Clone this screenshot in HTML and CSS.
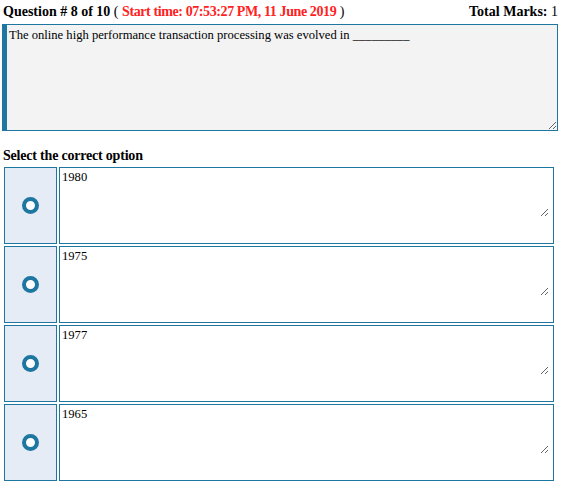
FILE: index.html
```html
<!DOCTYPE html>
<html lang="en">
<head>
    <meta charset="UTF-8">
    <title>Quiz - Question 8</title>
    <link rel="stylesheet" href="styles.css">
</head>
<body>
    <div class="quiz">
        <div class="quiz-header">
            <div class="q-title">Question # 8 of 10 <span class="plain">(</span> <span class="start-time">Start time: 07:53:27 PM, 11 June 2019</span> <span class="plain">)</span></div>
            <div class="q-marks">Total Marks: <span class="plain">1</span></div>
        </div>
        <div class="question-box">
            <textarea class="question-text" readonly>The online high performance transaction processing was evolved in _________</textarea>
        </div>
        <h3 class="options-title">Select the correct option</h3>
        <div class="options">
            <div class="option-row">
                <div class="option-radio"><span class="ring"></span></div>
                <div class="option-box"><textarea class="option-text" readonly>1980</textarea></div>
            </div>
            <div class="option-row">
                <div class="option-radio"><span class="ring"></span></div>
                <div class="option-box"><textarea class="option-text" readonly>1975</textarea></div>
            </div>
            <div class="option-row">
                <div class="option-radio"><span class="ring"></span></div>
                <div class="option-box"><textarea class="option-text" readonly>1977</textarea></div>
            </div>
            <div class="option-row">
                <div class="option-radio"><span class="ring"></span></div>
                <div class="option-box"><textarea class="option-text" readonly>1965</textarea></div>
            </div>
        </div>
    </div>
</body>
</html>
```

FILE: styles.css
```css
body { margin: 0; background: #fff; font-family: "Liberation Serif", "Times New Roman", serif; color: #000; }
.quiz { padding: 3px 6px 0 2px; }
.quiz-header {
    display: flex;
    justify-content: space-between;
    align-items: baseline;
    font-size: 14px;
    font-weight: bold;
    line-height: 18px;
    padding-left: 1px;
}
.plain { font-weight: normal; }
.start-time { color: #f22; letter-spacing: -0.4px; }
.question-box {
    margin-top: 3px;
    border: 1px solid #1d77a0;
    border-left: 5px solid #1d77a0;
    height: 105px;
    display: flex;
}
.question-text {
    flex: 1;
    margin: 0;
    border: none;
    background: #f3f3f3;
    font-family: "Liberation Serif", "Times New Roman", serif;
    font-size: 12.6px;
    padding: 3px 2px;
    outline: none;
}
.options-title {
    font-size: 14px;
    margin: 17px 0 3px 1px;
    line-height: 16px;
    letter-spacing: -0.2px;
}
.options {
    display: flex;
    flex-direction: column;
    gap: 2px;
    padding-left: 2px;
    padding-right: 4px;
}
.option-row {
    display: flex;
    gap: 2px;
    height: 77px;
}
.option-radio {
    width: 51px;
    border: 1px solid #1d77a0;
    background: #e6ecf6;
    display: flex;
    align-items: center;
    justify-content: center;
}
.ring {
    width: 9px;
    height: 9px;
    border: 4px solid #1d77a0;
    border-radius: 50%;
    background: #fff;
}
.option-box {
    flex: 1;
    border: 1px solid #1d77a0;
    background: #fff;
}
.option-text {
    display: block;
    box-sizing: border-box;
    width: calc(100% - 4px);
    height: 49px;
    margin: 0;
    border: none;
    background: #fff;
    font-family: "Liberation Serif", "Times New Roman", serif;
    font-size: 12.6px;
    padding: 2px 2px;
    outline: none;
}
```
